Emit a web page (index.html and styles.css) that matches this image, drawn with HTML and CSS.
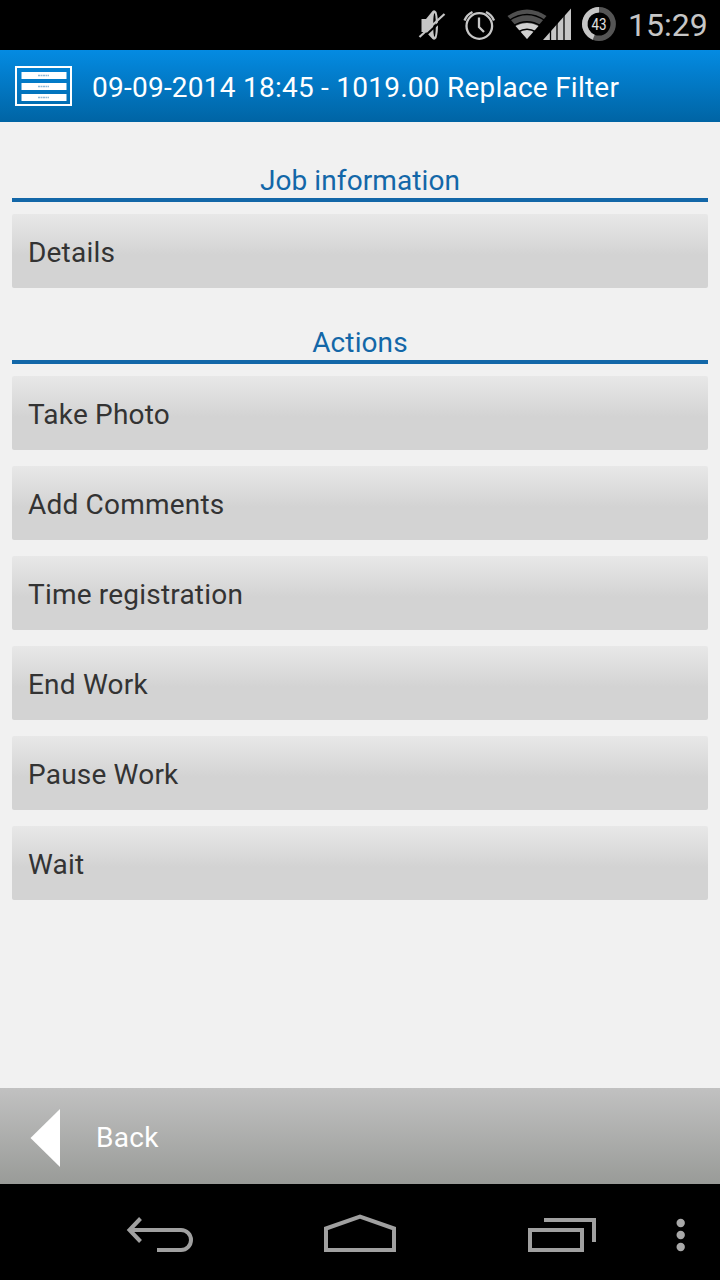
FILE: index.html
```html
<!DOCTYPE html>
<html lang="en">
<head>
    <meta charset="UTF-8">
    <meta name="viewport" content="width=device-width, initial-scale=1.0">
    <title>Replace Filter</title>
    <link rel="stylesheet" href="styles.css">
</head>
<body>
    <div class="status-bar">
        <svg class="status-icons" width="206" height="50" viewBox="414 0 206 50">
            <!-- muted -->
            <path d="M421.500 19h4.500l6.500-8q2-2 4 1q1.500 5 1.500 13t-1.500 13q-2 3-4 1l-6.500-7h-4.500z" fill="#c6c6c6"/>
            <ellipse cx="434.500" cy="25" rx="1.300" ry="12" fill="#000"/>
            <path d="M421 39.500L446 16.500" stroke="#000" stroke-width="2"/>
            <path d="M419.500 37L444.500 14" stroke="#c6c6c6" stroke-width="2.200"/>
            <!-- alarm -->
            <g fill="none" stroke="#c6c6c6" stroke-width="2.300">
                <circle cx="479.300" cy="26" r="12.800"/>
                <path d="M479 17.500v9.500l5 5"/>
                <path d="M464.500 20.500q2-5.500 8-8.500M494 20.500q-2-5.500-8-8.500"/>
            </g>
            <!-- wifi -->
            <path d="M527 39L507.500 16Q527 3 546.500 16z" fill="#505050"/>
            <path d="M527 39L515.500 26Q527 20 538.500 26z" fill="#d0d0d0"/>
            <path d="M509 20.500Q527 8.500 545 20.500M513 26Q527 17.500 541 26M518 32Q527 26.500 536 32" fill="none" stroke="#000" stroke-width="1.500"/>
            <!-- signal -->
            <path d="M543 40L571 8.500V40z" fill="#c6c6c6"/>
            <path d="M550.500 30v11M557 23v18M564 15v26" stroke="#000" stroke-width="1.300"/>
            <!-- battery -->
            <circle cx="599" cy="24" r="14.200" fill="none" stroke="#555" stroke-width="5.400"/>
            <path d="M599 9.800A14.200 14.200 0 0 0 593.700 37.200" fill="none" stroke="#c6c6c6" stroke-width="5.400"/>
            <text class="battery-level" x="599" y="30" text-anchor="middle" textLength="15" lengthAdjust="spacingAndGlyphs">43</text>
        </svg>
        <span class="clock">15:29</span>
    </div>

    <header class="title-bar">
        <svg class="menu-icon" width="57" height="40" viewBox="0 0 57 40">
            <rect x="1" y="1" width="55" height="38" fill="none" stroke="#fff" stroke-width="2"/>
            <path d="M6.500 6h45v7h-45zM6.500 17h45v7h-45zM6.500 28h45v7h-45z" fill="#fff"/>
            <path d="M23 9.500h11M23 20.500h11M23 31.500h11" stroke="#8fb9d6" stroke-width="1.500" stroke-dasharray="2 .5"/>
        </svg>
        <h1>09-09-2014 18:45 - 1019.00 Replace Filter</h1>
    </header>

    <main>
        <section>
            <h2>Job information</h2>
            <button>Details</button>
        </section>
        <section>
            <h2>Actions</h2>
            <button>Take Photo</button>
            <button>Add Comments</button>
            <button>Time registration</button>
            <button>End Work</button>
            <button>Pause Work</button>
            <button>Wait</button>
        </section>
    </main>

    <footer class="back-bar">
        <svg width="30" height="60" viewBox="0 0 30 60">
            <path d="M.5 30L30 1v58z" fill="#fff"/>
        </svg>
        <span>Back</span>
    </footer>

    <nav class="nav-bar">
        <svg width="720" height="96" viewBox="0 1184 720 96" fill="none" stroke="#a0a0a0" stroke-width="4">
            <path d="M129 1230h52a10 10 0 0 1 0 20h-24M140.500 1218.500L129.500 1230l11 11.500"/>
            <path d="M326 1250v-21.500l34-12 34 12V1250z"/>
            <path d="M530 1230h52v20h-52zM544 1220h50v22"/>
            <g fill="#a9a9a9" stroke="none">
                <circle cx="680.700" cy="1223" r="4.200"/>
                <circle cx="680.700" cy="1235" r="4.200"/>
                <circle cx="680.700" cy="1247" r="4.200"/>
            </g>
        </svg>
    </nav>
</body>
</html>
```
FILE: styles.css
```css
body {
    margin: 0;
    height: 1280px;
    display: flex;
    flex-direction: column;
    background: #f1f1f1;
    font-family: Roboto, sans-serif;
    font-size: 28px;
}
.status-bar {
    height: 50px;
    display: flex;
    justify-content: flex-end;
    background: #000;
    color: #c6c6c6;
}
.clock {
    width: 88px;
    padding-left: 8px;
    padding-right: 4px;
    font-size: 32px;
    line-height: 51px;
}
.battery-level {
    font-size: 16px;
    fill: #e0e0e0;
}
.title-bar {
    height: 72px;
    display: flex;
    align-items: center;
    gap: 20px;
    padding-left: 15px;
    background: linear-gradient(#048be2, #0064a4);
    color: #fff;
}
h1 {
    margin: 0;
    padding-top: 2px;
    font-size: 28px;
    font-weight: 400;
    letter-spacing: 0.24px;
    white-space: nowrap;
}
main {
    flex: 1;
    padding: 36px 12px 0;
}
section {
    margin-bottom: 32px;
}
h2 {
    margin: 0 0 12px;
    height: 40px;
    border-bottom: 4px solid #1367a8;
    color: #1367a8;
    font-size: 28px;
    font-weight: 400;
    letter-spacing: 0.1px;
    line-height: 45px;
    text-align: center;
}
button {
    display: block;
    width: 100%;
    height: 74px;
    margin-bottom: 16px;
    padding: 3px 16px 0;
    border: none;
    border-radius: 2px;
    background: linear-gradient(#e8e8e8, #d3d3d3 55%, #d3d3d3);
    color: #333;
    font-family: inherit;
    font-size: 28px;
    letter-spacing: 0.2px;
    text-align: left;
}
section button:last-child {
    margin-bottom: 0;
}
.back-bar {
    height: 96px;
    display: flex;
    align-items: center;
    gap: 36px;
    padding: 3px 0 0 30px;
    box-sizing: border-box;
    background: linear-gradient(#c1c1c1, #999b98);
    color: #fff;
    letter-spacing: 0.3px;
}
.nav-bar {
    height: 96px;
    background: #000;
}
.nav-bar svg {
    display: block;
}
```
